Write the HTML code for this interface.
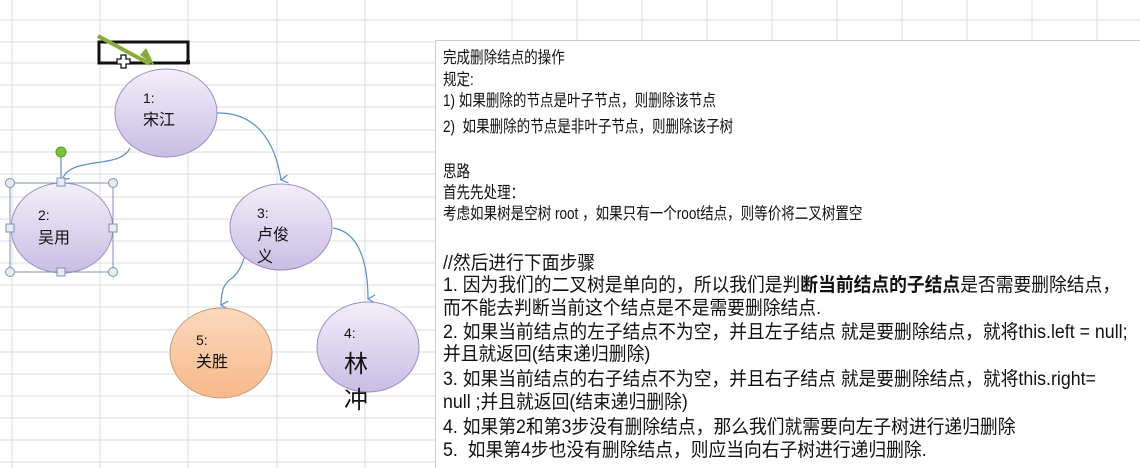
<!DOCTYPE html>
<html><head><meta charset="utf-8"><style>
body{margin:0;width:1140px;height:468px;overflow:hidden;background:#fff;position:relative;font-family:"Liberation Sans","Noto Sans CJK SC",sans-serif}
.t{position:absolute;left:443px;font-size:16.5px;color:#111;white-space:nowrap;line-height:20px;transform:scaleX(0.82);transform-origin:0 0}
.b{font-size:19px;line-height:22px;transform:scaleX(0.935)}
svg{position:absolute;left:0;top:0}
</style></head><body>
<svg width="1140" height="468">
<defs>
<linearGradient id="pg" x1="0" y1="0" x2="0" y2="1"><stop offset="0" stop-color="#f3effa"/><stop offset="1" stop-color="#c9bde3"/></linearGradient>
<linearGradient id="og" x1="0" y1="0" x2="0" y2="1"><stop offset="0" stop-color="#fcd9bd"/><stop offset="1" stop-color="#f7b98b"/></linearGradient>
<marker id="ar" markerWidth="10" markerHeight="10" refX="5" refY="8" orient="auto-start-reverse" markerUnits="userSpaceOnUse"><path d="M1,1 L5,8 L9,1" fill="none" stroke="#5a8fc6" stroke-width="1.2"/></marker>
</defs>
<g stroke="#d9dde6" stroke-width="1">
<line x1="12" y1="0" x2="12" y2="468"/><line x1="100" y1="0" x2="100" y2="468"/><line x1="188" y1="0" x2="188" y2="468"/><line x1="277" y1="0" x2="277" y2="468"/><line x1="365" y1="0" x2="365" y2="468"/>
<line x1="512" y1="0" x2="512" y2="40"/><line x1="577" y1="0" x2="577" y2="40"/><line x1="642" y1="0" x2="642" y2="40"/><line x1="707" y1="0" x2="707" y2="40"/><line x1="772" y1="0" x2="772" y2="40"/><line x1="837" y1="0" x2="837" y2="40"/><line x1="902" y1="0" x2="902" y2="40"/><line x1="967" y1="0" x2="967" y2="40"/><line x1="1032" y1="0" x2="1032" y2="40"/><line x1="1097" y1="0" x2="1097" y2="40"/>
<line x1="0" y1="20" x2="1140" y2="20"/>
<line x1="0" y1="42" x2="435" y2="42"/><line x1="0" y1="63" x2="435" y2="63"/><line x1="0" y1="85" x2="435" y2="85"/><line x1="0" y1="107" x2="435" y2="107"/><line x1="0" y1="130" x2="435" y2="130"/><line x1="0" y1="152" x2="435" y2="152"/><line x1="0" y1="174" x2="435" y2="174"/><line x1="0" y1="197" x2="435" y2="197"/><line x1="0" y1="219" x2="435" y2="219"/><line x1="0" y1="241" x2="435" y2="241"/><line x1="0" y1="263" x2="435" y2="263"/><line x1="0" y1="285" x2="435" y2="285"/><line x1="0" y1="307" x2="435" y2="307"/><line x1="0" y1="330" x2="435" y2="330"/><line x1="0" y1="352" x2="435" y2="352"/><line x1="0" y1="374" x2="435" y2="374"/><line x1="0" y1="396" x2="435" y2="396"/><line x1="0" y1="418" x2="435" y2="418"/><line x1="0" y1="440" x2="435" y2="440"/><line x1="0" y1="462" x2="435" y2="462"/>
</g>
<rect x="435.5" y="40.5" width="710" height="430" fill="#fff" stroke="#c8ccd4"/>
<g fill="none" stroke="#5a8fc6" stroke-width="1.2">
<path d="M130,148 C120,170 70,155 62,180" marker-end="url(#ar)"/>
<path d="M217,113 C255,112 275,140 281,180" marker-end="url(#ar)"/>
<path d="M245,255 C235,290 222,270 221,305" marker-end="url(#ar)"/>
<path d="M333,228 C360,232 368,265 368,299" marker-end="url(#ar)"/>
<line x1="61" y1="155" x2="61" y2="180"/>
</g>
<ellipse cx="166" cy="113" rx="51" ry="44" fill="url(#pg)" stroke="#9a8cc4"/>
<ellipse cx="62" cy="228" rx="51" ry="45" fill="url(#pg)" stroke="#9a8cc4"/>
<ellipse cx="281" cy="227" rx="51" ry="43" fill="url(#pg)" stroke="#9a8cc4"/>
<ellipse cx="221" cy="353" rx="51" ry="45" fill="url(#og)" stroke="#c99a7a"/>
<ellipse cx="368" cy="347" rx="51" ry="45" fill="url(#pg)" stroke="#9a8cc4"/>
<rect x="10" y="183" width="103" height="89" fill="none" stroke="#7f93b0"/>
<g fill="#e6ecf2" stroke="#7f93b0">
<circle cx="10" cy="183" r="4.5"/><circle cx="113" cy="183" r="4.5"/><circle cx="10" cy="272" r="4.5"/><circle cx="113" cy="272" r="4.5"/>
<rect x="57" y="178" width="8" height="8"/><rect x="57" y="268" width="8" height="8"/><rect x="6" y="224" width="8" height="8"/><rect x="109" y="224" width="8" height="8"/>
</g>
<circle cx="61" cy="152" r="5" fill="#7cc23c" stroke="#5a9a2a"/>
<rect x="99" y="42" width="89" height="21" fill="none" stroke="#111" stroke-width="3"/>
<rect x="186" y="60" width="4" height="4" fill="#111"/>
<path d="M98,36 L150,64" stroke="#8aab3c" stroke-width="4"/>
<path d="M140,55 L155,66 L146,48" fill="#8aab3c"/>
<path d="M121,55 h5 v4 h4 v5 h-4 v4 h-5 v-4 h-4 v-5 h4z" fill="#fff" stroke="#111" stroke-width="1.3"/>
<g font-family="Liberation Sans,Noto Sans CJK SC,sans-serif" fill="#111">
<text x="143" y="103" font-size="14">1:</text><text x="143" y="125" font-size="16">宋江</text>
<text x="38" y="220" font-size="14">2:</text><text x="38" y="243" font-size="16">吴用</text>
<text x="257" y="218" font-size="14">3:</text><text x="257" y="240" font-size="16">卢俊</text><text x="257" y="262" font-size="16">义</text>
<text x="196" y="345" font-size="14">5:</text><text x="196" y="367" font-size="16">关胜</text>
<text x="344" y="338" font-size="14">4:</text><text x="344" y="372" font-size="24">林</text><text x="344" y="408" font-size="24">冲</text>
</g>
</svg>
<div class="t" style="top:48px">完成删除结点的操作</div>
<div class="t" style="top:70px">规定:</div>
<div class="t" style="top:91px">1) 如果删除的节点是叶子节点，则删除该节点</div>
<div class="t" style="top:117px">2)&nbsp; 如果删除的节点是非叶子节点，则删除该子树</div>
<div class="t" style="top:162px">思路</div>
<div class="t" style="top:183px">首先先处理：</div>
<div class="t" style="top:204px">考虑如果树是空树 root ，如果只有一个root结点，则等价将二叉树置空</div>
<div class="t b" style="top:253px">//然后进行下面步骤</div>
<div class="t b" style="top:275px">1. 因为我们的二叉树是单向的，所以我们是判<b>断当前结点的子结点</b>是否需要删除结点，</div>
<div class="t b" style="top:298px">而不能去判断当前这个结点是不是需要删除结点.</div>
<div class="t b" style="top:322px">2. 如果当前结点的左子结点不为空，并且左子结点 就是要删除结点，就将this.left = null;</div>
<div class="t b" style="top:344px">并且就返回(结束递归删除)</div>
<div class="t b" style="top:369px">3. 如果当前结点的右子结点不为空，并且右子结点 就是要删除结点，就将this.right=</div>
<div class="t b" style="top:392px">null ;并且就返回(结束递归删除)</div>
<div class="t b" style="top:417px">4. 如果第2和第3步没有删除结点，那么我们就需要向左子树进行递归删除</div>
<div class="t b" style="top:440px">5.&nbsp; 如果第4步也没有删除结点，则应当向右子树进行递归删除.</div>
</body></html>
